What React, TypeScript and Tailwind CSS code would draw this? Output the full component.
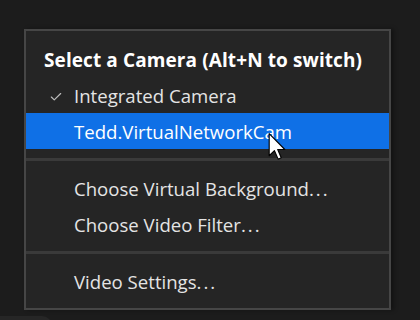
import { Check } from 'lucide-react';

function Separator() {
  return <div className="my-[9px] h-[3px] bg-[#3a3a3a]" />;
}

function Item({ label, dots, active }: { label: string; dots?: boolean; active?: boolean }) {
  return (
    <div
      className={`relative flex h-[36px] items-center pl-[48px] pt-[2px] ${
        active ? 'bg-[#0f70e6] text-white' : 'text-[#e4e4e4]'
      }`}
    >
      {label}
      {dots && <span className="tracking-[2px]">...</span>}
    </div>
  );
}

function Cursor() {
  return (
    <svg
      className="absolute left-[268px] top-[133px]"
      width="18"
      height="27"
      viewBox="0 0 12 19"
    >
      <path
        d="M0.5 0.5 L0.5 16 L4.2 12.4 L6.8 18.4 L9 17.4 L6.5 11.6 L11.5 11.6 Z"
        fill="#ffffff"
        stroke="#000000"
        strokeWidth="0.8"
        strokeLinejoin="round"
      />
    </svg>
  );
}

export default function App() {
  return (
    <div
      className="relative h-[320px] w-[420px] overflow-hidden bg-[#1c1c1c] pt-[29px] pl-[24px]"
      style={{ fontFamily: '"Open Sans", "Noto Sans", sans-serif' }}
    >
      <div className="w-[367px] border-2 border-[#464646] bg-[#252525] pt-[10px] pb-[9px] text-[18.6px] leading-none shadow-[3px_0_4px_rgba(0,0,0,0.35)]">
        <div className="flex h-[36px] items-center pl-[18px] pt-[3px] text-[19px] font-bold tracking-[0.1px] text-white">
          Select a Camera (Alt+N to switch)
        </div>
        <div className="relative flex h-[36px] items-center pl-[48px] pt-[2px] text-[#e4e4e4]">
          <Check className="absolute left-[23px] top-[13px] h-[14px] w-[14px] text-[#bdbdbd]" strokeWidth={2} />
          Integrated Camera
        </div>
        <Item label="Tedd.VirtualNetworkCam" active />
        <Separator />
        <Item label="Choose Virtual Background" dots />
        <Item label="Choose Video Filter" dots />
        <Separator />
        <Item label="Video Settings" dots />
      </div>
      <div className="mt-[6px] -ml-[24px] h-[10px] w-[52px] rounded-tr-[10px] bg-[#262626]" />
      <Cursor />
    </div>
  );
}
